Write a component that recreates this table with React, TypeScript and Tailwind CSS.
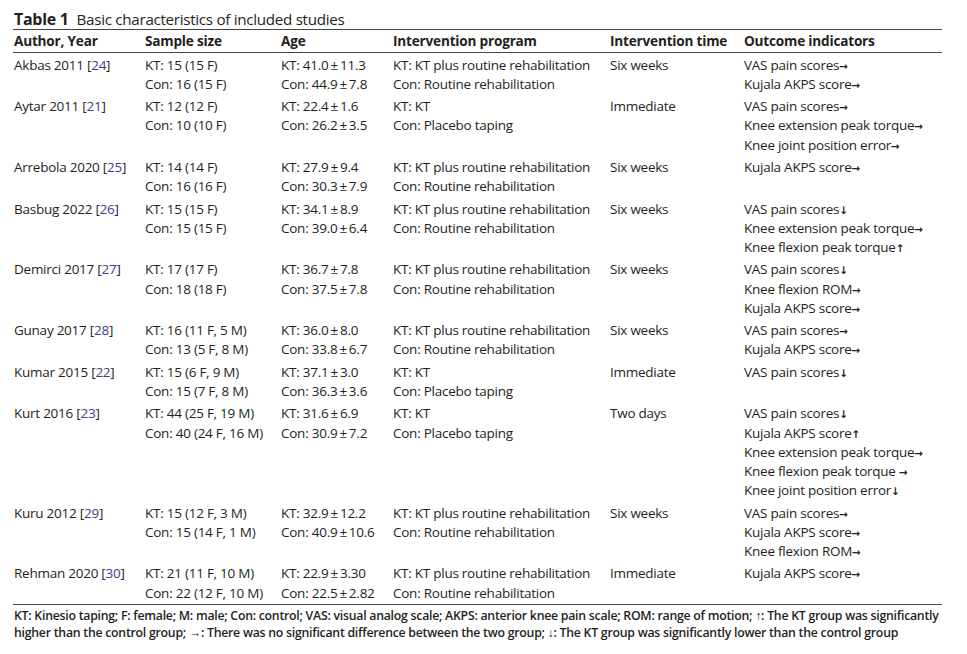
import React from "react";

type Study = {
  author: string;
  ref: string;
  sample: string[];
  age: string[];
  program: string[];
  time: string;
  outcomes: string[];
};

const pm = "\u2009\u00B1\u2009";

const studies: Study[] = [
  {
    author: "Akbas 2011",
    ref: "24",
    sample: ["KT: 15 (15 F)", "Con: 16 (15 F)"],
    age: [`KT: 41.0${pm}11.3`, `Con: 44.9${pm}7.8`],
    program: ["KT: KT plus routine rehabilitation", "Con: Routine rehabilitation"],
    time: "Six weeks",
    outcomes: ["VAS pain scores→", "Kujala AKPS score→"],
  },
  {
    author: "Aytar 2011",
    ref: "21",
    sample: ["KT: 12 (12 F)", "Con: 10 (10 F)"],
    age: [`KT: 22.4${pm}1.6`, `Con: 26.2${pm}3.5`],
    program: ["KT: KT", "Con: Placebo taping"],
    time: "Immediate",
    outcomes: ["VAS pain scores→", "Knee extension peak torque→", "Knee joint position error→"],
  },
  {
    author: "Arrebola 2020",
    ref: "25",
    sample: ["KT: 14 (14 F)", "Con: 16 (16 F)"],
    age: [`KT: 27.9${pm}9.4`, `Con: 30.3${pm}7.9`],
    program: ["KT: KT plus routine rehabilitation", "Con: Routine rehabilitation"],
    time: "Six weeks",
    outcomes: ["Kujala AKPS score→"],
  },
  {
    author: "Basbug 2022",
    ref: "26",
    sample: ["KT: 15 (15 F)", "Con: 15 (15 F)"],
    age: [`KT: 34.1${pm}8.9`, `Con: 39.0${pm}6.4`],
    program: ["KT: KT plus routine rehabilitation", "Con: Routine rehabilitation"],
    time: "Six weeks",
    outcomes: ["VAS pain scores↓", "Knee extension peak torque→", "Knee flexion peak torque↑"],
  },
  {
    author: "Demirci 2017",
    ref: "27",
    sample: ["KT: 17 (17 F)", "Con: 18 (18 F)"],
    age: [`KT: 36.7${pm}7.8`, `Con: 37.5${pm}7.8`],
    program: ["KT: KT plus routine rehabilitation", "Con: Routine rehabilitation"],
    time: "Six weeks",
    outcomes: ["VAS pain scores↓", "Knee flexion ROM→", "Kujala AKPS score→"],
  },
  {
    author: "Gunay 2017",
    ref: "28",
    sample: ["KT: 16 (11 F, 5 M)", "Con: 13 (5 F, 8 M)"],
    age: [`KT: 36.0${pm}8.0`, `Con: 33.8${pm}6.7`],
    program: ["KT: KT plus routine rehabilitation", "Con: Routine rehabilitation"],
    time: "Six weeks",
    outcomes: ["VAS pain scores→", "Kujala AKPS score→"],
  },
  {
    author: "Kumar 2015",
    ref: "22",
    sample: ["KT: 15 (6 F, 9 M)", "Con: 15 (7 F, 8 M)"],
    age: [`KT: 37.1${pm}3.0`, `Con: 36.3${pm}3.6`],
    program: ["KT: KT", "Con: Placebo taping"],
    time: "Immediate",
    outcomes: ["VAS pain scores↓"],
  },
  {
    author: "Kurt 2016",
    ref: "23",
    sample: ["KT: 44 (25 F, 19 M)", "Con: 40 (24 F, 16 M)"],
    age: [`KT: 31.6${pm}6.9`, `Con: 30.9${pm}7.2`],
    program: ["KT: KT", "Con: Placebo taping"],
    time: "Two days",
    outcomes: [
      "VAS pain scores↓",
      "Kujala AKPS score↑",
      "Knee extension peak torque→",
      "Knee flexion peak torque →",
      "Knee joint position error↓",
    ],
  },
  {
    author: "Kuru 2012",
    ref: "29",
    sample: ["KT: 15 (12 F, 3 M)", "Con: 15 (14 F, 1 M)"],
    age: [`KT: 32.9${pm}12.2`, `Con: 40.9${pm}10.6`],
    program: ["KT: KT plus routine rehabilitation", "Con: Routine rehabilitation"],
    time: "Six weeks",
    outcomes: ["VAS pain scores→", "Kujala AKPS score→", "Knee flexion ROM→"],
  },
  {
    author: "Rehman 2020",
    ref: "30",
    sample: ["KT: 21 (11 F, 10 M)", "Con: 22 (12 F, 10 M)"],
    age: [`KT: 22.9${pm}3.30`, `Con: 22.5${pm}2.82`],
    program: ["KT: KT plus routine rehabilitation", "Con: Routine rehabilitation"],
    time: "Immediate",
    outcomes: ["Kujala AKPS score→"],
  },
];

const cols = "grid grid-cols-[132px_136px_112px_217px_134px_1fr]";

function Lines({ items }: { items: string[] }) {
  return (
    <div className="flex flex-col">
      {items.map((t) => (
        <span key={t} className="whitespace-nowrap">
          {t}
        </span>
      ))}
    </div>
  );
}

// outcome text with the trailing arrow drawn a little heavier, as in the print
function Outcomes({ items }: { items: string[] }) {
  return (
    <div className="flex flex-col">
      {items.map((t) => (
        <span key={t} className="whitespace-nowrap">
          {t.slice(0, -1)}
          <span className="font-['DejaVu_Sans'] text-[10.5px] font-bold leading-none">{t.slice(-1)}</span>
        </span>
      ))}
    </div>
  );
}

export default function App() {
  return (
    <div
      className="min-h-screen bg-white text-[#231f20] pl-[13px] pt-[9px]"
      style={{ fontFamily: '"Open Sans", "Noto Sans", sans-serif' }}
    >
      <div className="w-[929px]">
        {/* Caption */}
        <div className="flex items-baseline gap-[8px] leading-[20px] border-b border-[#444]">
          <span className="pl-px text-[16px] font-bold tracking-[-0.3px]">Table 1</span>
          <span className="text-[15.2px] tracking-[-0.3px]">Basic characteristics of included studies</span>
        </div>

        {/* Header */}
        <div className={`${cols} text-[13.6px] font-bold leading-[22px] border-b border-[#444] tracking-[-0.2px]`}>
          <div className="pl-px">Author, Year</div>
          <div>Sample size</div>
          <div>Age</div>
          <div>Intervention program</div>
          <div>Intervention time</div>
          <div>Outcome indicators</div>
        </div>

        {/* Body */}
        <div className="border-b border-[#444] text-[13.5px] leading-[19.2px] tracking-[-0.25px] pt-px">
          {studies.map((s) => (
            <div key={s.author} className={`${cols} py-[1.6px]`}>
              <div className="pl-px whitespace-nowrap">
                {s.author} [<span className="text-[#3d3a8f]">{s.ref}</span>]
              </div>
              <Lines items={s.sample} />
              <Lines items={s.age} />
              <Lines items={s.program} />
              <div>{s.time}</div>
              <Outcomes items={s.outcomes} />
            </div>
          ))}
        </div>

        {/* Footnote */}
        <p className="pl-px pt-[3px] text-[12.3px] font-semibold leading-[16.8px] tracking-[-0.25px] whitespace-nowrap">
          KT: Kinesio taping; F: female; M: male; Con: control; VAS: visual analog scale; AKPS: anterior knee pain
          scale; ROM: range of motion; ↑: The KT group was significantly
          <br />
          higher than the control group; →: There was no significant difference between the two group; ↓: The KT
          group was significantly lower than the control group
        </p>
      </div>
    </div>
  );
}
